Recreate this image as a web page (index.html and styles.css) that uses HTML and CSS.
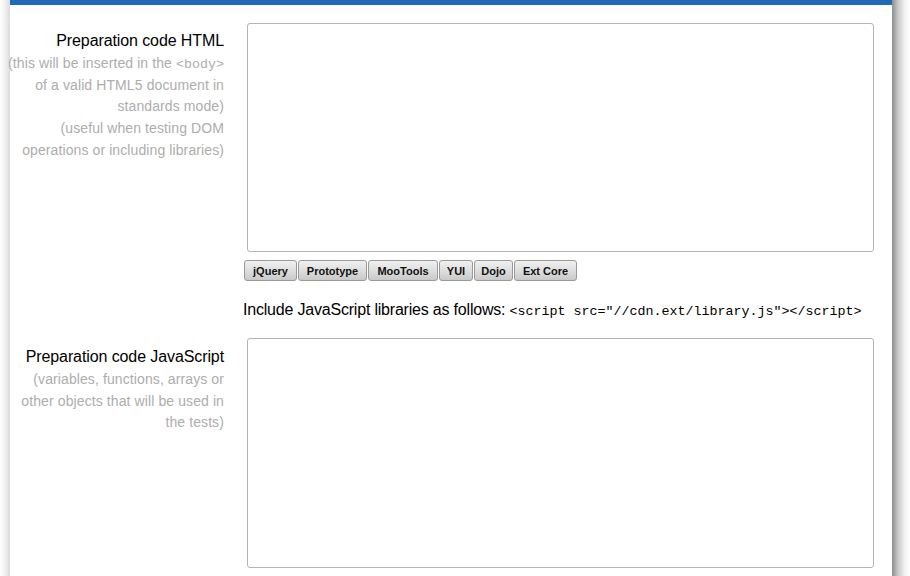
FILE: index.html
```html
<!DOCTYPE html>
<html>
<head>
<meta charset="utf-8">
<link rel="stylesheet" href="styles.css">
</head>
<body>
<div class="page">
  <div class="panel">
    <div class="topbar"></div>
    <div class="row">
      <div class="label">
        <div class="title">Preparation code HTML</div>
        <div class="hint">(this will be inserted in the <code>&lt;body&gt;</code> of a valid HTML5 document in standards mode)</div>
        <div class="hint">(useful when testing DOM operations or including libraries)</div>
      </div>
      <div class="field">
        <textarea class="box box-html"></textarea>
        <div class="libs">
          <button class="lib lib-jquery">jQuery</button>
          <button class="lib lib-prototype">Prototype</button>
          <button class="lib lib-mootools">MooTools</button>
          <button class="lib lib-yui">YUI</button>
          <button class="lib lib-dojo">Dojo</button>
          <button class="lib lib-ext">Ext Core</button>
        </div>
        <p class="include">Include JavaScript libraries as follows: <code>&lt;script src="//cdn.ext/library.js"&gt;&lt;/script&gt;</code></p>
      </div>
    </div>
    <div class="row">
      <div class="label">
        <div class="title">Preparation code JavaScript</div>
        <div class="hint">(variables, functions, arrays or other objects that will be used in the tests)</div>
      </div>
      <div class="field">
        <textarea class="box box-js"></textarea>
      </div>
    </div>
  </div>
</div>
</body>
</html>
```

FILE: styles.css
```css
html, body {
  margin: 0;
  padding: 0;
  height: 100%;
  overflow: hidden;
}
body {
  background: linear-gradient(to right, #ffffff 0px, #f4f4f4 4px, #dcdcdc 10px, #dcdcdc 892px, #8c8c8c 892px, #c8c8c8 898px, #f2f2f2 905px, #ffffff 910px);
  font-family: "Liberation Sans", Arial, sans-serif;
  color: #000;
}
.page {
  padding-left: 10px;
  width: 882px;
  height: 100%;
}
.panel {
  background: #fff;
  height: 100%;
  padding-right: 18px;
}
.topbar {
  height: 5px;
  background: #1f69b6;
  margin-right: -18px;
}
.row {
  display: grid;
  grid-template-columns: 214px 627px;
  column-gap: 23px;
  padding-top: 18px;
}
.row + .row {
  padding-top: 15px;
}
.label {
  text-align: right;
  padding-top: 6px;
}
.row + .row .label {
  padding-top: 7px;
}
.title {
  font-size: 16px;
  line-height: 24px;
  letter-spacing: -0.1px;
}
.hint {
  font-size: 14px;
  line-height: 21.7px;
  color: #adadad;
  letter-spacing: 0.1px;
  margin-left: -4px;
}
.hint code {
  font-family: "Liberation Mono", "Courier New", monospace;
  font-size: 13.33px;
  line-height: 0;
  letter-spacing: 0;
}
.field {
  display: flex;
  flex-direction: column;
}
.box {
  display: block;
  box-sizing: border-box;
  width: 627px;
  border: 1px solid #b4b4b4;
  border-radius: 3px;
  background: #fff;
  resize: none;
  margin: 0;
}
.box-html {
  height: 229px;
}
.box-js {
  height: 230px;
}
.libs {
  display: flex;
  gap: 1px;
  margin: 8px 0 0 -3px;
}
.lib {
  box-sizing: border-box;
  font-family: "Liberation Sans", Arial, sans-serif;
  font-weight: bold;
  font-size: 11px;
  color: #111;
  height: 21px;
  padding: 0;
  text-align: center;
  border: 1px solid #9a9a9a;
  border-radius: 3px;
  background: linear-gradient(to bottom, #f0f0f0 0%, #dedede 50%, #c9c9c9 100%);
  margin: 0;
}
.lib-jquery { width: 53px; }
.lib-prototype { width: 69px; }
.lib-mootools { width: 70px; }
.lib-yui { width: 34px; }
.lib-dojo { width: 39px; }
.lib-ext { width: 63px; }
.include {
  margin: 18px 0 0 -4px;
  font-size: 16px;
  line-height: 22px;
  letter-spacing: -0.2px;
  white-space: nowrap;
}
.include code {
  font-family: "Liberation Mono", "Courier New", monospace;
  font-size: 13.33px;
  letter-spacing: 0;
}
```
